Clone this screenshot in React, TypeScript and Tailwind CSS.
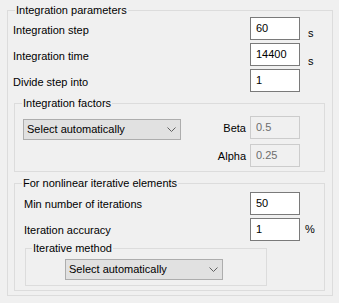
import React from "react";

const Field = ({ value, disabled = false }: { value: string; disabled?: boolean }) => (
  <input
    readOnly
    value={value}
    className={
      disabled
        ? "w-[50px] h-[23px] border border-[#cccccc] bg-[#f0f0f0] pl-[5px] pb-[2px] text-[#6d6d6d] outline-none"
        : "w-[50px] h-[23px] border border-[#7a7a7a] bg-white pl-[5px] pb-[2px] text-black outline-none"
    }
  />
);

const Combo = ({ label }: { label: string }) => (
  <div className="w-[158px] h-[21px] border border-[#adadad] bg-[#e1e1e1] flex items-center justify-between pl-[3px] pr-[4px]">
    <span className="pb-[1px]">{label}</span>
    <svg width="9" height="5" viewBox="0 0 9 5">
      <polyline points="0.5,0.5 4.5,4.5 8.5,0.5" fill="none" stroke="#606060" strokeWidth="1" />
    </svg>
  </div>
);

const Group = ({
  title,
  className,
  legendClass = "ml-[2px]",
  children,
}: {
  title: string;
  className: string;
  legendClass?: string;
  children: React.ReactNode;
}) => (
  <fieldset className={"border border-[#dcdcdc] " + className}>
    <legend className={"px-[1px] leading-[14px] " + legendClass}>{title}</legend>
    {children}
  </fieldset>
);

export default function App() {
  return (
    <div className="w-[339px] h-[303px] bg-[#f0f0f0] pl-[7px] pt-[3px] text-[11px] leading-[14px] text-black font-[family-name:'Liberation_Sans',Arial,sans-serif]">
      <Group title="Integration parameters" className="w-[326px] h-[293px] pl-[5px]">
        <div className="flex flex-col gap-[3px]">
          <div className="flex items-center h-[23px]">
            <span className="w-[237px] pt-[3px]">Integration step</span>
            <Field value="60" />
            <span className="ml-[8px] mt-[9px]">s</span>
          </div>
          <div className="flex items-center h-[23px]">
            <span className="w-[237px] pt-[3px]">Integration time</span>
            <Field value="14400" />
            <span className="ml-[8px] mt-[12px]">s</span>
          </div>
          <div className="flex items-center h-[23px]">
            <span className="w-[237px] pt-[3px]">Divide step into</span>
            <Field value="1" />
          </div>
        </div>

        <Group title="Integration factors" className="mt-[4px] ml-[1px] w-[311px] h-[76px] pl-[8px]" legendClass="ml-[-1px]">
          <div className="flex">
            <div className="mt-[9px]">
              <Combo label="Select automatically" />
            </div>
            <div className="ml-auto mr-[24px] pt-[6px] flex flex-col items-end gap-[5px]">
              <div className="flex items-center gap-[4px]">
                <span>Beta</span>
                <Field value="0.5" disabled />
              </div>
              <div className="flex items-center gap-[4px]">
                <span>Alpha</span>
                <Field value="0.25" disabled />
              </div>
            </div>
          </div>
        </Group>

        <Group title="For nonlinear iterative elements" className="mt-[4px] ml-[1px] w-[311px] h-[115px] pl-[9px]" legendClass="ml-[-2px]">
          <div className="pt-[2px] flex flex-col gap-[3px]">
            <div className="flex items-center h-[23px]">
              <span className="w-[226px] pt-[1px]">Min number of iterations</span>
              <Field value="50" />
            </div>
            <div className="flex items-center h-[23px]">
              <span className="w-[226px] pt-[1px]">Iteration accuracy</span>
              <Field value="1" />
              <span className="ml-[5px] pb-[2px]">%</span>
            </div>
          </div>
          <Group title="Iterative method" className="ml-[1px] w-[242px] h-[45px] pl-[6px]" legendClass="ml-[0px]">
            <div className="mt-[4px] ml-[33px]">
              <Combo label="Select automatically" />
            </div>
          </Group>
        </Group>
      </Group>
    </div>
  );
}
